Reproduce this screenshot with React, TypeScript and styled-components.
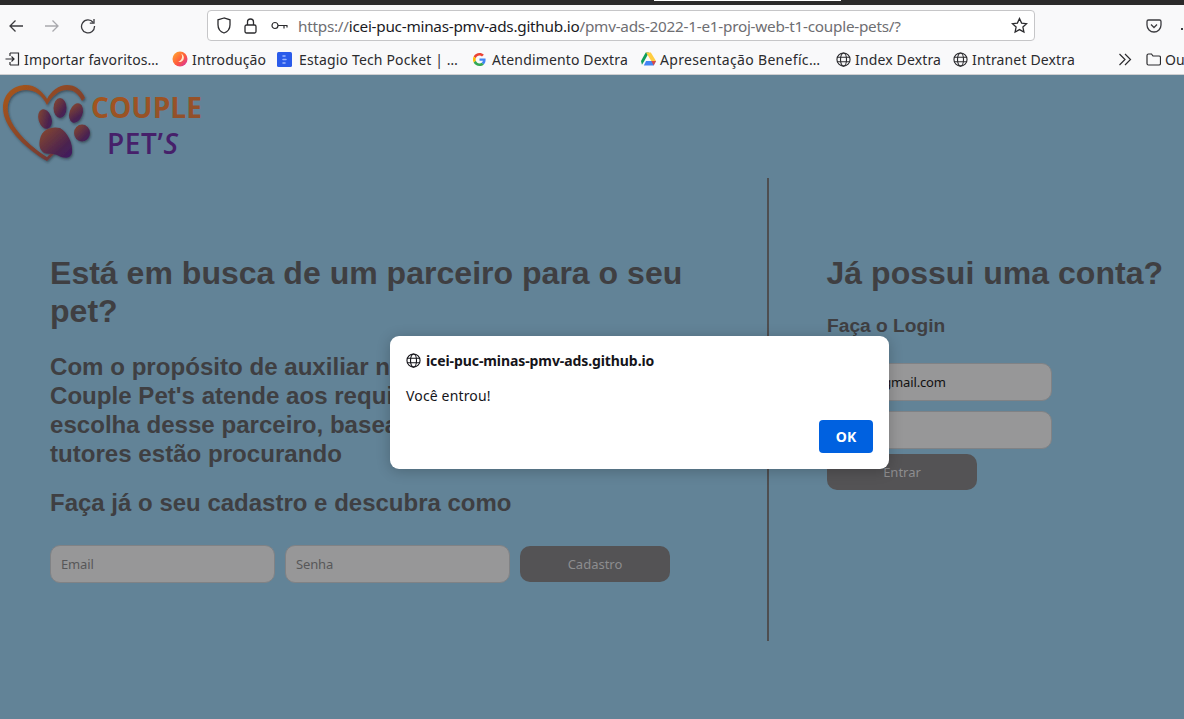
import React from "react";
import styled, { createGlobalStyle } from "styled-components";

const Global = createGlobalStyle`
  html, body { margin: 0; padding: 0; height: 100%; overflow: hidden; background: #628397; }
  * { box-sizing: border-box; }
  #root { height: 100%; }
`;

const UI = `"Noto Sans", "Open Sans", sans-serif`;
const Page = styled.div`
  width: 1184px; height: 719px; position: relative; overflow: hidden;
  display: flex; flex-direction: column; font-family: ${UI};
`;
const TitleStrip = styled.div`
  height: 5px; background: #2b2a2a; flex: none; padding-left: 654px;
`;
const TabSliver = styled.div`
  width: 187px; height: 1px; background: #fff;
`;
const Toolbar = styled.div`
  height: 38px; flex: none; background: #f9f9fa; display: flex; align-items: center; position: relative;
`;
const NavIcon = styled.svg<{ $x: number }>`
  position: absolute; left: ${p => p.$x}px; top: 13px;
`;
const UrlBar = styled.div`
  position: absolute; left: 207px; top: 5px; width: 828px; height: 31px;
  background: #fff; border: 1px solid #c6c6c8; border-radius: 4px;
  display: flex; align-items: center; padding-left: 8px;
`;
const UrlIcons = styled.div`
  display: flex; align-items: center; gap: 9px; width: 82px; flex: none;
`;
const LockIcon = styled.svg`
  margin-left: 3px;
`;
const KeyIcon = styled.svg`
  margin-left: 5px;
`;
const UrlText = styled.div`
  font-size: 15.3px; letter-spacing: -0.25px; white-space: nowrap; color: #6e6e72; flex: 1;
  b { font-weight: 400; color: #1b1b1f; }
`;
const Star = styled.svg`
  margin-right: 6px; flex: none;
`;
const Bookmarks = styled.div`
  height: 32px; flex: none; background: #f9f9fa; border-bottom: 1px solid #cfcfd1;
  position: relative; font-size: 14px; color: #2b2b2e; letter-spacing: 0.15px;
`;
const Mark = styled.div<{ $x: number; $gap?: number }>`
  position: absolute; left: ${p => p.$x}px; top: 7px; height: 18px; display: flex; align-items: center;
  gap: ${p => p.$gap ?? 4}px; white-space: nowrap;
`;
const WideLabel = styled.span`
  letter-spacing: 0.32px;
`;
const Content = styled.div`
  flex: 1; background: #628397; position: relative;
`;
const Logo = styled.svg`
  position: absolute; left: 0; top: 8px;
`;
const Columns = styled.div`
  display: flex; position: absolute; left: 0; right: 0; top: 103px; height: 463px;
`;
const Left = styled.div`
  width: 769px; flex: none; border-right: 2px solid #4e4e50; padding: 76px 60px 0 50px;
`;
const Right = styled.div`
  flex: 1; padding: 76px 0 0 58px; white-space: nowrap;
`;
const H1 = styled.h1`
  font: 700 32.05px/38px "Liberation Sans", Arial, sans-serif; color: #3f3f42; margin: 0;
`;
const AccountTitle = styled(H1)`
  margin-left: -0.5px;
`;
const H2 = styled.h2`
  font: 700 24.1px/29px "Liberation Sans", Arial, sans-serif; color: #3f3f42; margin: 22px 0 0;
`;
const H3 = styled.h3`
  font: 700 24px/28px "Liberation Sans", Arial, sans-serif; color: #3f3f42; margin: 21px 0 0;
`;
const H4 = styled.h4`
  font: 700 19.2px/22px "Liberation Sans", Arial, sans-serif; color: #3f3f42; margin: 23px 0 0;
`;
const SignupRow = styled.div`
  display: flex; gap: 10px; margin-top: 28px; align-items: center;
`;
const Field = styled.div<{ $w: number; $dark?: boolean }>`
  width: ${p => p.$w}px; height: 38px; border: 1px solid #808285; border-radius: 10px; background: #979798;
  display: flex; align-items: center; padding-left: 10px; font-size: 13px; letter-spacing: -0.15px;
  color: ${p => p.$dark ? "#111" : "#575759"};
  overflow: hidden; white-space: nowrap;
`;
const Btn = styled.div`
  width: 150px; height: 36px; background: #545355; border-radius: 10px; color: #8d8d8f;
  display: flex; align-items: center; justify-content: center; font-size: 13px;
`;
const LoginStack = styled.div`
  display: flex; flex-direction: column; align-items: flex-start; margin-top: 26px;
`;
const LoginField = styled(Field)`
  margin-bottom: 10px;
`;
const LoginBtn = styled(Btn)`
  margin-top: -5px;
`;
const Dialog = styled.div`
  position: absolute; left: 390px; top: 336px; width: 499px; height: 133px; background: #fff;
  border-radius: 9px; box-shadow: 0 2px 14px rgba(0,0,0,.22); color: #15141a; padding: 15px 16px;
`;
const DialogHead = styled.div`
  display: flex; align-items: center; gap: 5px; font-size: 14px; font-weight: 700; height: 18px; letter-spacing: -0.09px;
`;
const DialogMsg = styled.div`
  font-size: 14px; margin-top: 17px; height: 19px; line-height: 19px; letter-spacing: 0.15px;
`;
const DialogFoot = styled.div`
  display: flex; justify-content: flex-end; margin-top: 15px;
`;
const Ok = styled.div`
  width: 54px; height: 33px; background: #0061e0; color: #fff; border-radius: 4px; font-size: 14px; font-weight: 700;
  display: flex; align-items: center; justify-content: center;
`;

const Globe = ({ s = 15, c = "#2b2b2e" }: { s?: number; c?: string }) => (
  <svg width={s} height={s} viewBox="0 0 16 16" fill="none" stroke={c} strokeWidth="1.2">
    <circle cx="8" cy="8" r="7" /><ellipse cx="8" cy="8" rx="3.2" ry="7" /><path d="M1 5.6h14M1 10.4h14" />
  </svg>
);

const App = () => (
  <Page>
    <Global />
    <TitleStrip><TabSliver /></TitleStrip>
    <Toolbar>
      <NavIcon $x={8} width="16" height="16" viewBox="0 0 16 16" fill="none" stroke="#3b3b3f" strokeWidth="1.3"><path d="M15 8H2M7.500 2.500 2 8l5.500 5.500" /></NavIcon>
      <NavIcon $x={44} width="16" height="16" viewBox="0 0 16 16" fill="none" stroke="#a9a9ad" strokeWidth="1.3"><path d="M1 8h13M8.500 2.500 14 8l-5.500 5.500" /></NavIcon>
      <NavIcon $x={80} width="16" height="16" viewBox="0 0 16 16" fill="none" stroke="#3b3b3f" strokeWidth="1.3"><path d="M13.200 4.500A6.500 6.500 0 1 0 14.500 8" /><path d="M14 1v4.200H9.800" /></NavIcon>
      <UrlBar>
        <UrlIcons>
          <svg width="16" height="17" viewBox="0 0 16 17" fill="none" stroke="#2b2b2e" strokeWidth="1.3"><path d="M8 1 2 2.800v5C2 12 5 15 8 16c3-1 6-4 6-8.200v-5z" /></svg>
          <LockIcon width="13" height="16" viewBox="0 0 13 16" fill="none" stroke="#2b2b2e" strokeWidth="1.3"><rect x="1" y="7" width="11" height="8" rx="1.500" /><path d="M3.500 7V4a3 3 0 0 1 6 0v3" /></LockIcon>
          <KeyIcon width="17" height="10" viewBox="0 0 17 10" fill="none" stroke="#2b2b2e" strokeWidth="1.2"><circle cx="4" cy="4.500" r="3" /><path d="M7 4.500h9.500M13 4.500v3M16 4.500v2" /></KeyIcon>
        </UrlIcons>
        <UrlText><span>https://</span><b>icei-puc-minas-pmv-ads.github.io</b>/pmv-ads-2022-1-e1-proj-web-t1-couple-pets/?</UrlText>
        <Star width="17" height="17" viewBox="0 0 17 17" fill="none" stroke="#2b2b2e" strokeWidth="1.3"><path d="m8.500 1.500 2.100 4.600 5 .6-3.700 3.400 1 5-4.400-2.500-4.400 2.500 1-5L1.400 6.700l5-.6z" /></Star>
      </UrlBar>
      <NavIcon $x={1146} width="16" height="16" viewBox="0 0 16 16" fill="none" stroke="#3b3b3f" strokeWidth="1.3"><path d="M2.500 2h11A1.500 1.500 0 0 1 15 3.500V7A7 7 0 0 1 1 7V3.500A1.500 1.500 0 0 1 2.500 2z" /><path d="m5 6.500 3 3 3-3" /></NavIcon>
      <NavIcon $x={1180} width="4" height="16" viewBox="0 0 4 16" fill="#3b3b3f"><rect x="1" y="10" width="2" height="2" /></NavIcon>
    </Toolbar>
    <Bookmarks>
      <Mark $x={5}>
        <svg width="15" height="14" viewBox="0 0 15 14" fill="none" stroke="#2b2b2e" strokeWidth="1.2"><path d="M5 1h8.500v12H5M5 4V1M5 13v-3M.5 7H9M6.500 4.500 9 7 6.500 9.500" /></svg>
        <span>Importar favoritos…</span>
      </Mark>
      <Mark $x={172}>
        <svg width="16" height="16" viewBox="0 0 16 16"><defs><linearGradient id="ff" x1="0" y1="0" x2="1" y2="1"><stop offset="0" stopColor="#ffb02e" /><stop offset=".55" stopColor="#ff5a3c" /><stop offset="1" stopColor="#d02fb0" /></linearGradient></defs><circle cx="8" cy="8" r="7.500" fill="url(#ff)" /><path d="M9 2.500a4.500 4.500 0 0 1 2.500 6A4 4 0 0 1 6 10.500 5 5 0 0 0 9 2.500z" fill="#ffe9c9" /></svg>
        <span>Introdução</span>
      </Mark>
      <Mark $x={277} $gap={7}>
        <svg width="15" height="15" viewBox="0 0 15 15"><rect width="15" height="15" rx="1.500" fill="#2a5bea" /><path d="M6 4h2M6 7.500h3M6 11h2" stroke="#9db8ff" strokeWidth="1.500" strokeLinecap="round" /></svg>
        <span>Estagio Tech Pocket | …</span>
      </Mark>
      <Mark $x={473} $gap={6}>
        <svg width="13" height="13" viewBox="0 0 48 48"><path fill="#EA4335" d="M24 9.500c3.500 0 6.700 1.200 9.200 3.600l6.900-6.900C35.900 2.400 30.400 0 24 0 14.600 0 6.500 5.400 2.600 13.200l8 6.200C12.400 13.700 17.700 9.500 24 9.500z" /><path fill="#4285F4" d="M46.500 24.500c0-1.600-.1-3.100-.4-4.500H24v9h12.700c-.6 2.900-2.200 5.400-4.700 7.100l7.700 6C44.100 37.900 46.500 31.800 46.500 24.500z" /><path fill="#FBBC05" d="M10.500 28.600A14.500 14.500 0 0 1 10.500 19.400l-8-6.200a24 24 0 0 0 0 21.600z" /><path fill="#34A853" d="M24 48c6.500 0 11.900-2.100 15.900-5.800l-7.700-6c-2.200 1.400-4.900 2.300-8.200 2.300-6.300 0-11.600-4.200-13.500-9.900l-8 6.200C6.500 42.600 14.600 48 24 48z" /></svg>
        <span>Atendimento Dextra</span>
      </Mark>
      <Mark $x={641}>
        <svg width="15" height="14" viewBox="0 0 16 14"><path fill="#0f9d58" d="M5 0h3.500L3.500 9 1 13 0 9z" /><path fill="#ffcd40" d="M5.300 0h5.200L16 9h-5z" /><path fill="#4285f4" d="M3 14l2.400-5H16l-2.500 5z" /><path fill="#ea4335" d="M11 9h5l-2.500 5z" opacity=".9" /></svg>
        <WideLabel>Apresentação Benefíc…</WideLabel>
      </Mark>
      <Mark $x={836}><Globe /><span>Index Dextra</span></Mark>
      <Mark $x={953}><Globe /><span>Intranet Dextra</span></Mark>
      <Mark $x={1118}>
        <svg width="14" height="13" viewBox="0 0 14 13" fill="none" stroke="#2b2b2e" strokeWidth="1.2"><path d="m1.500 1 5.500 5.500L1.500 12M7 1l5.500 5.500L7 12" /></svg>
      </Mark>
      <Mark $x={1146}>
        <svg width="15" height="13" viewBox="0 0 15 13" fill="none" stroke="#2b2b2e" strokeWidth="1.2"><path d="M1 2.500A1.500 1.500 0 0 1 2.500 1h3L7 3h6a1.500 1.500 0 0 1 1.500 1.500v6A1.500 1.500 0 0 1 13 12H2.500A1.500 1.500 0 0 1 1 10.500z" /></svg>
        <span>Ou</span>
      </Mark>
    </Bookmarks>
    <Content>
      <Logo width="210" height="82" viewBox="0 0 210 82">
        <defs>
          <linearGradient id="lg" x1="0" y1="0" x2="1" y2="1"><stop offset="0" stopColor="#a9571a" /><stop offset=".7" stopColor="#7a3d30" /><stop offset="1" stopColor="#47205f" /></linearGradient>
          <linearGradient id="pw" x1="0" y1="0" x2="1" y2="1"><stop offset="0" stopColor="#8a4a2c" /><stop offset=".7" stopColor="#4a2250" /><stop offset="1" stopColor="#3e1b62" /></linearGradient>
          <linearGradient id="tx" x1="0" y1="0" x2="1" y2="1"><stop offset="0" stopColor="#a8561c" /><stop offset="1" stopColor="#8c4f2e" /></linearGradient>
          <filter id="sh" x="-10%" y="-10%" width="125%" height="125%"><feDropShadow dx="1" dy="1.500" stdDeviation="1" floodColor="#1c2a33" floodOpacity=".55" /></filter>
        </defs>
        <g filter="url(#sh)">
          <path fillRule="evenodd" fill="url(#lg)" d="M47 78 C34 71 7 50 3.500 30 C0.500 12 13 2 26 2 C35 2 42 8 47 16 C51 8 59 2 67 2 C75 2 81 6 85 15 L82 18 C78 10 73 7 67 7 C59 7 52 13 47 22 C42 12 35 7 26 7 C15 7 6 15 8 29 C11 47 35 67 47 74 L53 68 L55 70 Z" />
          <g fill="url(#pw)">
            <ellipse cx="45" cy="36" rx="6.500" ry="10" transform="rotate(-18 45 36)" />
            <ellipse cx="60" cy="25" rx="6.500" ry="10" />
            <ellipse cx="76" cy="30" rx="6.500" ry="10" transform="rotate(20 76 30)" />
            <ellipse cx="82" cy="50" rx="8" ry="8.500" />
            <path d="M40 56 C42 46 52 43 60 45 C68 50 73 60 72 70 C70 77 62 75 57 72 C52 70 44 72 42 68 C39 65 39 60 40 56 Z" />
          </g>
        </g>
        <text x="91" y="35" textLength="111" lengthAdjust="spacingAndGlyphs" fontFamily="'Open Sans', sans-serif" fontWeight="700" fontSize="29" fill="url(#tx)">COUPLE</text>
        <text x="107" y="71" textLength="71" lengthAdjust="spacing" fontFamily="'Open Sans', sans-serif" fontWeight="600" fontSize="28" fill="#46206a">PET’<tspan fontStyle="italic">S</tspan></text>
      </Logo>
      <Columns>
        <Left>
          <H1>Está em busca de um parceiro para o seu pet?</H1>
          <H2>Com o propósito de auxiliar na busca do parceiro, a Couple Pet's atende aos requisitos que auxiliam na escolha desse parceiro, baseado naquilo que os<br />tutores estão procurando</H2>
          <H3>Faça já o seu cadastro e descubra como</H3>
          <SignupRow>
            <Field $w={225}>Email</Field>
            <Field $w={225}>Senha</Field>
            <Btn>Cadastro</Btn>
          </SignupRow>
        </Left>
        <Right>
          <AccountTitle>Já possui uma conta?</AccountTitle>
          <H4>Faça o Login</H4>
          <LoginStack>
            <LoginField $w={225} $dark>{"\u00a0".repeat(14)}gmail.com</LoginField>
            <LoginField $w={225} />
            <LoginBtn>Entrar</LoginBtn>
          </LoginStack>
        </Right>
      </Columns>
    </Content>
    <Dialog>
      <DialogHead><Globe c="#15141a" /><span>icei-puc-minas-pmv-ads.github.io</span></DialogHead>
      <DialogMsg>Você entrou!</DialogMsg>
      <DialogFoot><Ok>OK</Ok></DialogFoot>
    </Dialog>
  </Page>
);
export default App;
